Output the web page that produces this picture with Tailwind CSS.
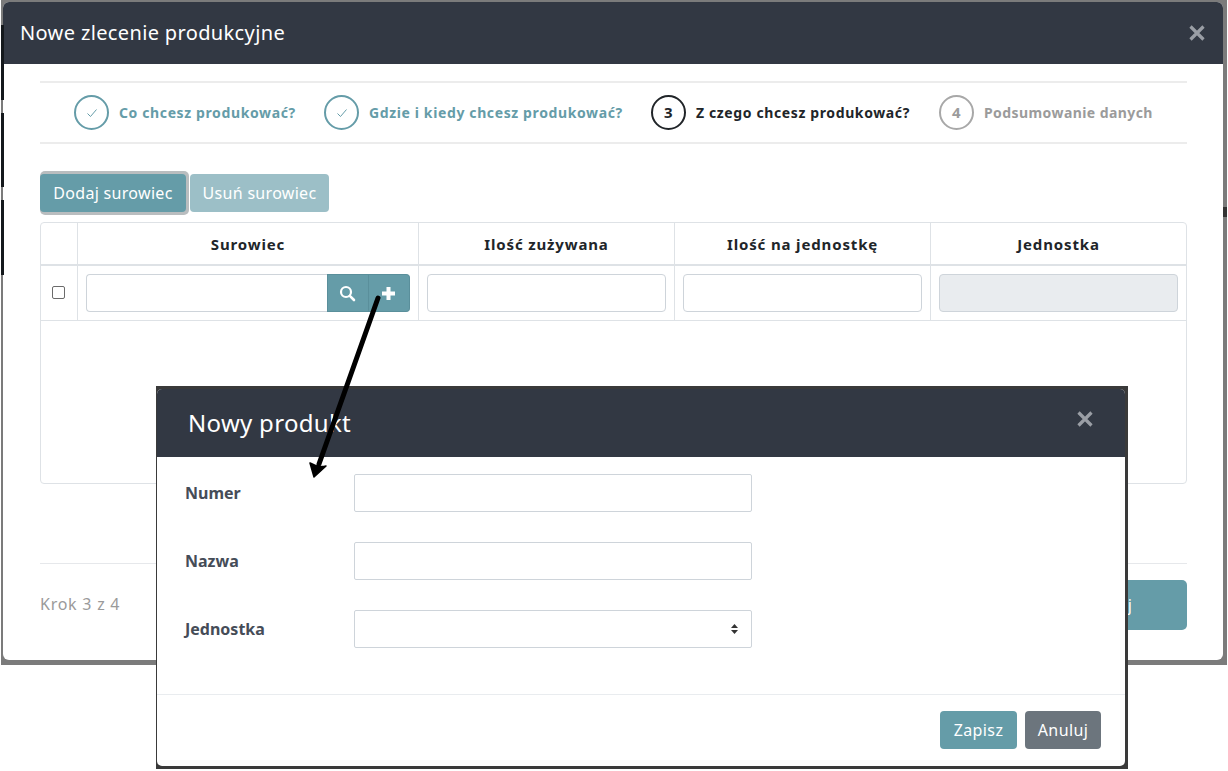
<!DOCTYPE html>
<html lang="pl"><head><meta charset="utf-8"><script src="https://cdn.jsdelivr.net/npm/@tailwindcss/browser@4"></script></head>
<body class="bg-white">
<div class="relative w-[1228px] h-[771px] overflow-hidden bg-white font-['Noto_Sans',sans-serif] text-[#2f3540]">
  <!-- main dialog frame -->
  <div class="ml-[1px] w-[1226px] h-[665px] bg-[#7b7b7b] pt-[2px] pl-[2px] pr-[4px] pb-[5px]">
    <div class="h-full bg-white rounded-[6px] overflow-hidden flex flex-col">
      <div class="h-[62px] shrink-0 bg-[#323843] flex items-center justify-between pl-[17px] pr-[17px]">
        <span class="text-[20px] text-white tracking-[0.36px]">Nowe zlecenie produkcyjne</span>
        <svg width="18" height="18" viewBox="0 0 18 18"><path d="M2.5 2.5 15.5 15.5M15.5 2.5 2.5 15.5" stroke="#9a9ea5" stroke-width="3.2"/></svg>
      </div>
      <div class="flex-1 pl-[37px] pr-[36px] pt-[17px] flex flex-col">
        <div class="h-[63px] border-y-2 border-[#ececec] flex items-center pl-[34px] text-[14px] font-bold tracking-[0.62px]">
          <div class="flex items-center gap-[10px] w-[250px] text-[#659ca8]">
            <span class="w-[35px] h-[35px] rounded-full border-2 border-[#659ca8] flex items-center justify-center"><svg width="12" height="10" viewBox="0 0 12 10"><path d="M1.5 5.5 4.5 8.5 10.5 1.5" fill="none" stroke="#659ca8" stroke-width="1"/></svg></span>
            <span>Co chcesz produkować?</span>
          </div>
          <div class="flex items-center gap-[10px] w-[327px] text-[#659ca8]">
            <span class="w-[35px] h-[35px] rounded-full border-2 border-[#659ca8] flex items-center justify-center"><svg width="12" height="10" viewBox="0 0 12 10"><path d="M1.5 5.5 4.5 8.5 10.5 1.5" fill="none" stroke="#659ca8" stroke-width="1"/></svg></span>
            <span>Gdzie i kiedy chcesz produkować?</span>
          </div>
          <div class="flex items-center gap-[10px] w-[288px] text-[#212529]">
            <span class="w-[35px] h-[35px] rounded-full border-2 border-[#212529] flex items-center justify-center text-[15px]">3</span>
            <span>Z czego chcesz produkować?</span>
          </div>
          <div class="flex items-center gap-[10px] text-[#9b9b9b] tracking-[0.42px]">
            <span class="w-[35px] h-[35px] rounded-full border-2 border-[#a8a8a8] flex items-center justify-center text-[15px]">4</span>
            <span>Podsumowanie danych</span>
          </div>
        </div>
        <div class="flex gap-[1px] mt-[30px] h-[38px] text-[16px] text-white tracking-[0.3px]">
          <div class="-my-[3px] h-[44px] py-[3px] pr-[3px] bg-[#b9bdbf] rounded-[5px]">
            <button class="w-[146px] h-[38px] bg-[#659ca8] rounded-[4px]">Dodaj surowiec</button>
          </div>
          <button class="w-[139px] h-[38px] bg-[#9cbfc7] rounded-[4px]">Usuń surowiec</button>
        </div>
        <div class="mt-[10px] h-[262px] border border-[#dee2e6] rounded-[4px]">
          <div class="grid grid-cols-[36px_341px_256px_256px_1fr] text-[15px] font-bold text-[#212529] tracking-[0.85px]">
            <div class="h-[43px] border-b-2 border-[#dee2e6]"></div>
            <div class="h-[43px] pt-px border-b-2 border-l border-[#dee2e6] flex items-center justify-center">Surowiec</div>
            <div class="h-[43px] pt-px border-b-2 border-l border-[#dee2e6] flex items-center justify-center">Ilość zużywana</div>
            <div class="h-[43px] pt-px border-b-2 border-l border-[#dee2e6] flex items-center justify-center">Ilość na jednostkę</div>
            <div class="h-[43px] pt-px border-b-2 border-l border-[#dee2e6] flex items-center justify-center">Jednostka</div>
            <div class="h-[55px] border-b border-[#dee2e6] flex items-center pl-[11px] pb-[2px]"><span class="w-[13px] h-[13px] border border-[#6b6b6b] rounded-[2px]"></span></div>
            <div class="h-[55px] border-b border-l border-[#dee2e6] flex items-center px-[8px]">
              <div class="h-[38px] flex-1 flex">
                <div class="flex-1 border border-[#ced4da] border-r-0 rounded-l-[4px]"></div>
                <div class="w-[42px] bg-[#659ca8] border border-[#5a8f9b] flex items-center justify-center pr-[2px]"><svg width="17" height="17" viewBox="0 0 17 17"><circle cx="7" cy="7" r="5" fill="none" stroke="#fff" stroke-width="2.2"/><path d="M10.8 10.8 15 15" stroke="#fff" stroke-width="2.6" stroke-linecap="round"/></svg></div>
                <div class="w-[41px] bg-[#659ca8] border border-l-0 border-[#5a8f9b] rounded-r-[4px] flex items-center justify-center pr-[2px]"><svg width="15" height="15" viewBox="0 0 15 15"><path d="M7.5 1v13M1 7.5h13" stroke="#fff" stroke-width="4"/></svg></div>
              </div>
            </div>
            <div class="h-[55px] border-b border-l border-[#dee2e6] flex items-center px-[8px]"><div class="h-[38px] w-full border border-[#ced4da] rounded-[4px]"></div></div>
            <div class="h-[55px] border-b border-l border-[#dee2e6] flex items-center px-[8px]"><div class="h-[38px] w-full border border-[#ced4da] rounded-[4px]"></div></div>
            <div class="h-[55px] border-b border-l border-[#dee2e6] flex items-center px-[8px]"><div class="h-[38px] w-full bg-[#e9ecef] border border-[#ced4da] rounded-[4px]"></div></div>
          </div>
        </div>
        <div class="mt-[79px] border-t border-[#e6e8eb] pt-[16px] flex justify-between">
          <span class="text-[16px] text-[#9a9a9a] mt-[12px] tracking-[0.75px]">Krok 3 z 4</span>
          <button class="h-[50px] bg-[#659ca8] rounded-[5px] pl-[30px] pr-[55px] text-[16px] text-white">Dalej</button>
        </div>
      </div>
    </div>
  </div>
  <!-- dark fragments of the page behind, at the frame's edges -->
  <div class="absolute left-[1px] top-[25px] w-[3px] h-[75px] bg-[#14181c]"></div>
  <div class="absolute left-[1px] top-[113px] w-[3px] h-[74px] bg-[#14181c]"></div>
  <div class="absolute left-[1px] top-[200px] w-[3px] h-[75px] bg-[#14181c]"></div>
  <div class="absolute left-[1223px] top-[207px] w-[4px] h-[10px] bg-[#333]"></div>

  <!-- second modal -->
  <div class="absolute left-[156px] top-[386px] w-[972px] h-[383px] bg-[#3a3a3a] pt-[3px] pl-[1px] pr-[3px] pb-[3px]">
    <div class="h-full bg-white rounded-[5px] overflow-hidden flex flex-col">
      <div class="h-[68px] shrink-0 bg-[#323843] flex items-center justify-between pl-[31px] pr-[31px]">
        <span class="text-[24px] text-white tracking-[0.3px]">Nowy produkt</span>
        <svg width="18" height="18" viewBox="0 0 18 18" class="-mt-[8px]"><path d="M2.5 2.5 15.5 15.5M15.5 2.5 2.5 15.5" stroke="#9a9ea5" stroke-width="3.2"/></svg>
      </div>
      <div class="flex-1 pl-[28px] pt-[17px] flex flex-col gap-[30px] text-[16px] font-bold text-[#454c57]">
        <div class="flex items-center h-[38px]"><span class="w-[169px]">Numer</span><div class="w-[398px] h-[38px] border border-[#ced4da] rounded-[2px]"></div></div>
        <div class="flex items-center h-[38px]"><span class="w-[169px]">Nazwa</span><div class="w-[398px] h-[38px] border border-[#ced4da] rounded-[2px]"></div></div>
        <div class="flex items-center h-[38px]"><span class="w-[169px]">Jednostka</span><div class="w-[398px] h-[38px] border border-[#ced4da] rounded-[2px] flex items-center justify-end pr-[12px]"><svg width="9" height="12" viewBox="0 0 9 12"><path d="M4.5 1 8 5H1zM4.5 11 1 7h7z" fill="#333"/></svg></div></div>
      </div>
      <div class="h-[72px] shrink-0 border-t border-[#e9ecef] flex items-start justify-end gap-[8px] pt-[16px] pr-[24px] text-[16px] text-white tracking-[0.4px]">
        <button class="w-[77px] h-[38px] bg-[#659ca8] rounded-[4px]">Zapisz</button>
        <button class="w-[76px] h-[38px] bg-[#6c757d] rounded-[4px]">Anuluj</button>
      </div>
    </div>
  </div>

  <!-- annotation arrow -->
  <svg class="absolute left-0 top-0 pointer-events-none" width="1228" height="771" viewBox="0 0 1228 771">
    <path d="M378 298 319 464" stroke="#000" stroke-width="5" stroke-linecap="round"/>
    <path d="M310 463 Q318 468 326 466 L314 477 Z" fill="#000" stroke="#000" stroke-width="1.5" stroke-linejoin="round"/>
  </svg>
</div>
</body></html>
